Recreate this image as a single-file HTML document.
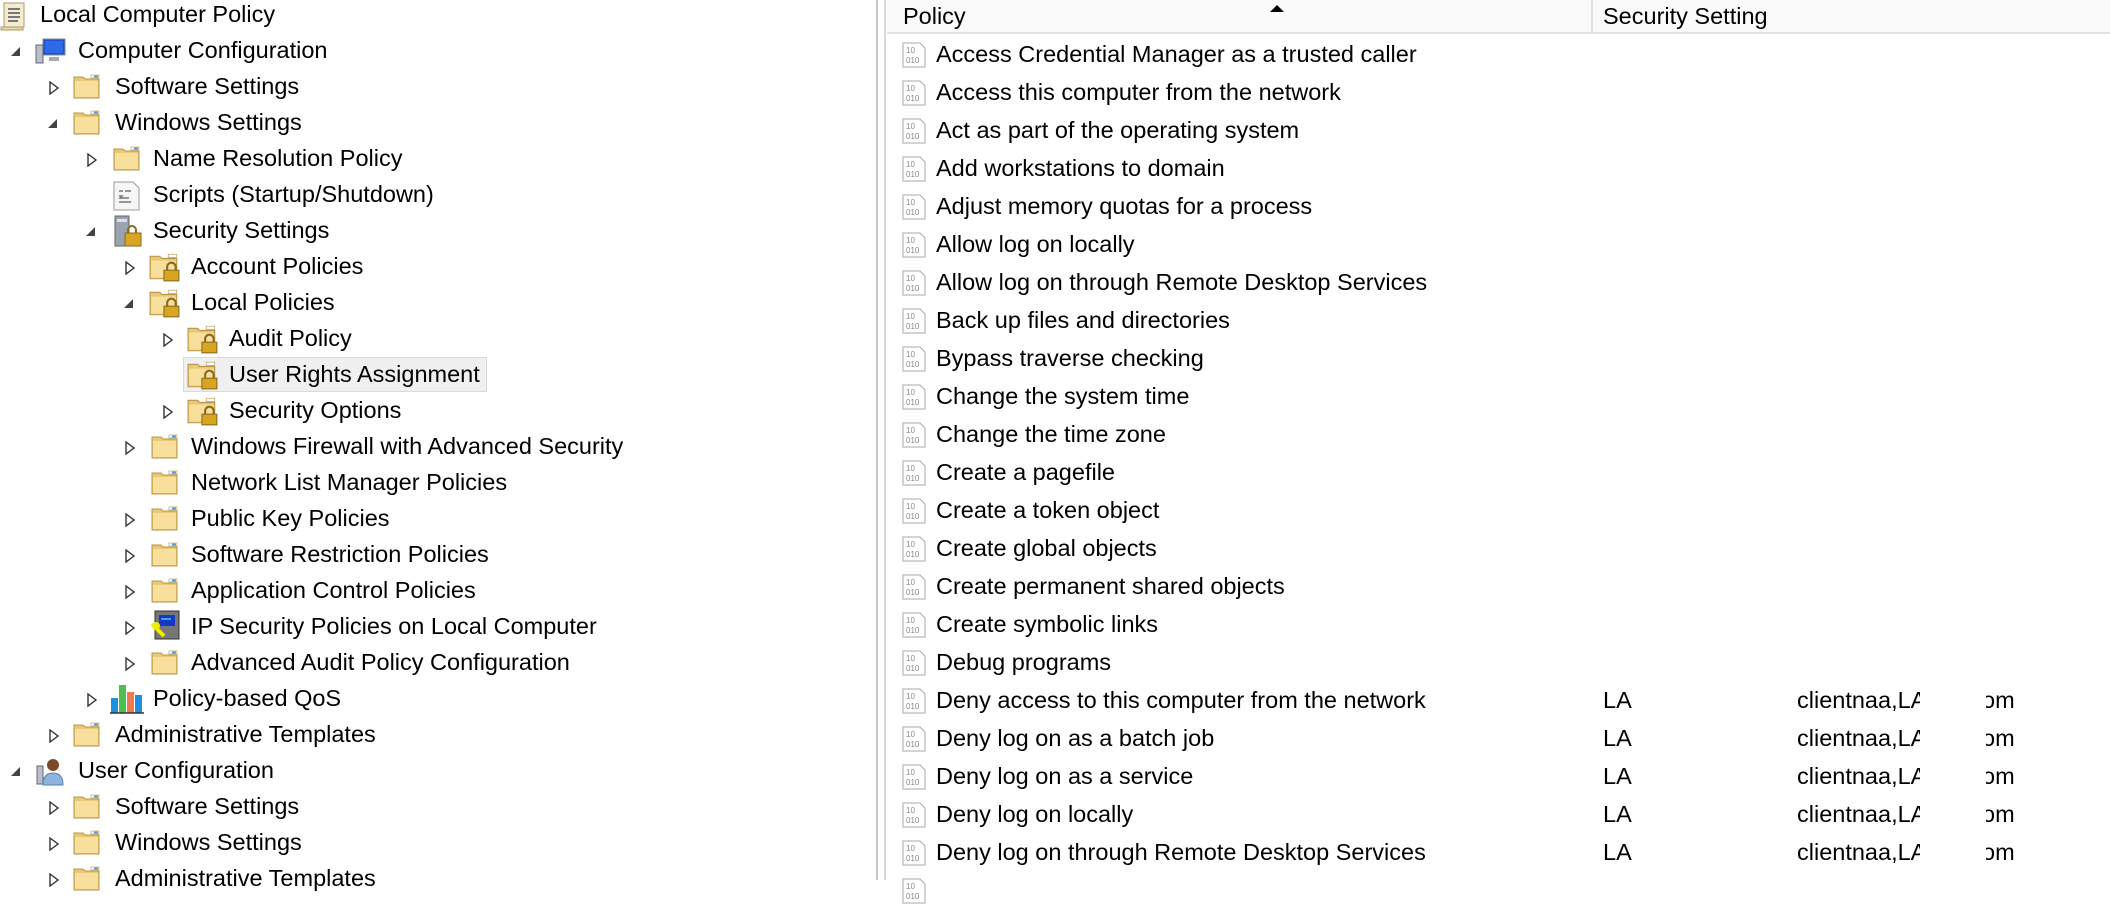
<!DOCTYPE html>
<html><head><meta charset="utf-8">
<style>
html,body{margin:0;padding:0;background:#fff;width:2110px;height:880px;overflow:hidden;font-family:"Liberation Sans",sans-serif;font-size:23.5px;color:#000}
.a{position:absolute;white-space:nowrap}
.t{position:absolute;white-space:nowrap;line-height:24px}
svg.i{position:absolute}
.om{position:absolute;left:1986px;width:40px;height:28px;overflow:hidden;line-height:24px}
.om span{position:relative;left:-4px}
</style></head><body>
<svg width="0" height="0" style="position:absolute">
<defs>
<symbol id="fold" viewBox="0 0 28 26"><path d="M1 4h9l2 2h14v19H1z" fill="#e8c877" stroke="#b9964a"/><rect x="2" y="8" width="23" height="16" fill="#f8df9c"/><rect x="18" y="2" width="8" height="3" fill="#fff" stroke="#b9964a" stroke-width=".6"/><rect x="21" y="2.5" width="4" height="2" fill="#4aa0e6"/></symbol>
<symbol id="lfold" viewBox="0 0 30 28"><path d="M1 4h9l2 2h14v19H1z" fill="#e8c877" stroke="#b9964a"/><rect x="2" y="8" width="23" height="16" fill="#f8df9c"/><rect x="18" y="2" width="8" height="3" fill="#fff" stroke="#b9964a" stroke-width=".6"/><path d="M17 18v-4a4 4 0 0 1 8 0v4" fill="none" stroke="#8a6b1d" stroke-width="2"/><rect x="14" y="17" width="14" height="10" fill="#d9a520" stroke="#8a6b1d"/></symbol>
<symbol id="pol" viewBox="0 0 26 26"><path d="M2 1h17l5 5v19H2z" fill="#fff" stroke="#aaa"/><text x="5" y="11" font-size="8" fill="#888" font-family="Liberation Sans">10</text><text x="5" y="21" font-size="8" fill="#888" font-family="Liberation Sans">010</text></symbol>
</defs></svg>

<div class="a" style="left:876px;top:0;width:2px;height:880px;background:#c8c8c8"></div>
<div class="a" style="left:884px;top:0;width:2px;height:880px;background:#d8d8d8"></div>

<div class="a" style="left:887px;top:0;width:1223px;height:32px;background:#fafafa;border-bottom:2px solid #e2e2e2"></div>
<div class="a" style="left:1591px;top:0;width:2px;height:32px;background:#e2e2e2"></div>
<div class="t" style="left:903px;top:4px">Policy</div>
<div class="t" style="left:1603px;top:4px">Security Setting</div>
<div class="a" style="left:1270px;top:5px;width:0;height:0;border-left:7px solid transparent;border-right:7px solid transparent;border-bottom:7px solid #000"></div>

<svg class="i" style="left:0;top:1px" width="28" height="30" viewBox="0 0 28 30"><path d="M4 2h20v24H4z" fill="#f3eccf" stroke="#a89a6a"/><path d="M8 8h12M8 12h12M8 16h12M8 20h10" stroke="#777" stroke-width="2"/><path d="M1 26h22v3H1z" fill="#e6d9a8" stroke="#a89a6a"/></svg>
<div class="t" style="left:40px;top:2px">Local Computer Policy</div>

<div class="a" style="left:183px;top:357px;width:302px;height:33px;background:#f0f0f0;border:1px solid #d9d9d9"></div>

<div style="position:absolute;left:0;top:0">
<svg class="i" style="left:10px;top:46px" width="11" height="11"><path d="M10 1V10H1z" fill="#444"/></svg>
<svg class="i" style="left:35px;top:37px" width="32" height="28" viewBox="0 0 32 28"><rect x="8" y="2" width="22" height="16" fill="#1e4fd6" stroke="#888"/><rect x="10" y="4" width="18" height="12" fill="#2d6be6"/><rect x="14" y="20" width="10" height="4" fill="#aaa"/><rect x="1" y="8" width="7" height="18" fill="#b9bfc8" stroke="#667"/></svg>
<div class="t" style="left:78px;top:38px">Computer Configuration</div>

<svg class="i" style="left:49px;top:81px" width="10" height="14"><path d="M1 1L9 7L1 13z" fill="#fff" stroke="#333" stroke-width="1.4"/></svg>
<svg class="i" style="left:73px;top:73px" width="28" height="26"><use href="#fold"/></svg>
<div class="t" style="left:115px;top:74px">Software Settings</div>

<svg class="i" style="left:47px;top:118px" width="11" height="11"><path d="M10 1V10H1z" fill="#444"/></svg>
<svg class="i" style="left:73px;top:109px" width="28" height="26"><use href="#fold"/></svg>
<div class="t" style="left:115px;top:110px">Windows Settings</div>

<svg class="i" style="left:87px;top:153px" width="10" height="14"><path d="M1 1L9 7L1 13z" fill="#fff" stroke="#333" stroke-width="1.4"/></svg>
<svg class="i" style="left:113px;top:145px" width="28" height="26"><use href="#fold"/></svg>
<div class="t" style="left:153px;top:146px">Name Resolution Policy</div>

<svg class="i" style="left:113px;top:181px" width="27" height="30" viewBox="0 0 27 30"><path d="M1 1h19l6 6v22H1z" fill="#f6f6f6" stroke="#999"/><path d="M6 10h4M12 10h6M6 15h3l-2 2h9M6 21h12" stroke="#777" stroke-width="1.5" fill="none"/></svg>
<div class="t" style="left:153px;top:182px">Scripts (Startup/Shutdown)</div>

<svg class="i" style="left:85px;top:226px" width="11" height="11"><path d="M10 1V10H1z" fill="#444"/></svg>
<svg class="i" style="left:114px;top:215px" width="28" height="32" viewBox="0 0 28 32"><rect x="1" y="1" width="14" height="30" fill="#9aa3ad" stroke="#666"/><rect x="3" y="4" width="10" height="3" fill="#dde"/><path d="M14 19v-4a4 4 0 0 1 8 0v4" fill="none" stroke="#8a6b1d" stroke-width="2"/><rect x="11" y="18" width="16" height="13" fill="#d9a520" stroke="#8a6b1d"/></svg>
<div class="t" style="left:153px;top:218px">Security Settings</div>

<svg class="i" style="left:125px;top:261px" width="10" height="14"><path d="M1 1L9 7L1 13z" fill="#fff" stroke="#333" stroke-width="1.4"/></svg>
<svg class="i" style="left:149px;top:252px" width="32" height="30" viewBox="0 0 30 28"><use href="#lfold"/></svg>
<div class="t" style="left:191px;top:254px">Account Policies</div>

<svg class="i" style="left:123px;top:298px" width="11" height="11"><path d="M10 1V10H1z" fill="#444"/></svg>
<svg class="i" style="left:149px;top:288px" width="32" height="30" viewBox="0 0 30 28"><use href="#lfold"/></svg>
<div class="t" style="left:191px;top:290px">Local Policies</div>

<svg class="i" style="left:163px;top:333px" width="10" height="14"><path d="M1 1L9 7L1 13z" fill="#fff" stroke="#333" stroke-width="1.4"/></svg>
<svg class="i" style="left:187px;top:324px" width="32" height="30" viewBox="0 0 30 28"><use href="#lfold"/></svg>
<div class="t" style="left:229px;top:326px">Audit Policy</div>

<svg class="i" style="left:187px;top:360px" width="32" height="30" viewBox="0 0 30 28"><use href="#lfold"/></svg>
<div class="t" style="left:229px;top:362px">User Rights Assignment</div>

<svg class="i" style="left:163px;top:405px" width="10" height="14"><path d="M1 1L9 7L1 13z" fill="#fff" stroke="#333" stroke-width="1.4"/></svg>
<svg class="i" style="left:187px;top:396px" width="32" height="30" viewBox="0 0 30 28"><use href="#lfold"/></svg>
<div class="t" style="left:229px;top:398px">Security Options</div>

<svg class="i" style="left:125px;top:441px" width="10" height="14"><path d="M1 1L9 7L1 13z" fill="#fff" stroke="#333" stroke-width="1.4"/></svg>
<svg class="i" style="left:151px;top:433px" width="28" height="26"><use href="#fold"/></svg>
<div class="t" style="left:191px;top:434px">Windows Firewall with Advanced Security</div>

<svg class="i" style="left:151px;top:469px" width="28" height="26"><use href="#fold"/></svg>
<div class="t" style="left:191px;top:470px">Network List Manager Policies</div>

<svg class="i" style="left:125px;top:513px" width="10" height="14"><path d="M1 1L9 7L1 13z" fill="#fff" stroke="#333" stroke-width="1.4"/></svg>
<svg class="i" style="left:151px;top:505px" width="28" height="26"><use href="#fold"/></svg>
<div class="t" style="left:191px;top:506px">Public Key Policies</div>

<svg class="i" style="left:125px;top:549px" width="10" height="14"><path d="M1 1L9 7L1 13z" fill="#fff" stroke="#333" stroke-width="1.4"/></svg>
<svg class="i" style="left:151px;top:541px" width="28" height="26"><use href="#fold"/></svg>
<div class="t" style="left:191px;top:542px">Software Restriction Policies</div>

<svg class="i" style="left:125px;top:585px" width="10" height="14"><path d="M1 1L9 7L1 13z" fill="#fff" stroke="#333" stroke-width="1.4"/></svg>
<svg class="i" style="left:151px;top:577px" width="28" height="26"><use href="#fold"/></svg>
<div class="t" style="left:191px;top:578px">Application Control Policies</div>

<svg class="i" style="left:125px;top:621px" width="10" height="14"><path d="M1 1L9 7L1 13z" fill="#fff" stroke="#333" stroke-width="1.4"/></svg>
<svg class="i" style="left:151px;top:610px" width="30" height="32" viewBox="0 0 30 32"><rect x="4" y="1" width="24" height="28" fill="#777" stroke="#333"/><rect x="8" y="5" width="16" height="11" fill="#1638c8"/><rect x="10" y="8" width="10" height="2" fill="#3ac"/><path d="M1 14l12 12" stroke="#ee0" stroke-width="4"/><circle cx="5" cy="16" r="4" fill="#ee0"/></svg>
<div class="t" style="left:191px;top:614px">IP Security Policies on Local Computer</div>

<svg class="i" style="left:125px;top:657px" width="10" height="14"><path d="M1 1L9 7L1 13z" fill="#fff" stroke="#333" stroke-width="1.4"/></svg>
<svg class="i" style="left:151px;top:649px" width="28" height="26"><use href="#fold"/></svg>
<div class="t" style="left:191px;top:650px">Advanced Audit Policy Configuration</div>

<svg class="i" style="left:87px;top:693px" width="10" height="14"><path d="M1 1L9 7L1 13z" fill="#fff" stroke="#333" stroke-width="1.4"/></svg>
<svg class="i" style="left:110px;top:684px" width="34" height="30" viewBox="0 0 34 30"><rect x="1" y="14" width="7" height="15" fill="#1d8fe0"/><rect x="9" y="1" width="7" height="28" fill="#4cc04c"/><rect x="17" y="8" width="7" height="21" fill="#f07a50"/><rect x="25" y="11" width="7" height="18" fill="#1d8fe0"/><path d="M0 29h34" stroke="#333" stroke-width="1.5"/></svg>
<div class="t" style="left:153px;top:686px">Policy-based QoS</div>

<svg class="i" style="left:49px;top:729px" width="10" height="14"><path d="M1 1L9 7L1 13z" fill="#fff" stroke="#333" stroke-width="1.4"/></svg>
<svg class="i" style="left:73px;top:721px" width="28" height="26"><use href="#fold"/></svg>
<div class="t" style="left:115px;top:722px">Administrative Templates</div>

<svg class="i" style="left:10px;top:766px" width="11" height="11"><path d="M10 1V10H1z" fill="#444"/></svg>
<svg class="i" style="left:36px;top:756px" width="30" height="30" viewBox="0 0 30 30"><rect x="1" y="10" width="6" height="18" fill="#b9bfc8" stroke="#667"/><circle cx="17" cy="9" r="6" fill="#7a4a2a"/><path d="M7 29c0-9 4-12 10-12s10 3 10 12z" fill="#8fb4e0" stroke="#5a7fb0"/></svg>
<div class="t" style="left:78px;top:758px">User Configuration</div>

<svg class="i" style="left:49px;top:801px" width="10" height="14"><path d="M1 1L9 7L1 13z" fill="#fff" stroke="#333" stroke-width="1.4"/></svg>
<svg class="i" style="left:73px;top:793px" width="28" height="26"><use href="#fold"/></svg>
<div class="t" style="left:115px;top:794px">Software Settings</div>

<svg class="i" style="left:49px;top:837px" width="10" height="14"><path d="M1 1L9 7L1 13z" fill="#fff" stroke="#333" stroke-width="1.4"/></svg>
<svg class="i" style="left:73px;top:829px" width="28" height="26"><use href="#fold"/></svg>
<div class="t" style="left:115px;top:830px">Windows Settings</div>

<svg class="i" style="left:49px;top:873px" width="10" height="14"><path d="M1 1L9 7L1 13z" fill="#fff" stroke="#333" stroke-width="1.4"/></svg>
<svg class="i" style="left:73px;top:865px" width="28" height="26"><use href="#fold"/></svg>
<div class="t" style="left:115px;top:866px">Administrative Templates</div>
</div>

<div style="position:absolute;left:0;top:0">
<svg class="i" style="left:901px;top:42px" width="26" height="26"><use href="#pol"/></svg><div class="t" style="left:936px;top:42px">Access Credential Manager as a trusted caller</div>
<svg class="i" style="left:901px;top:80px" width="26" height="26"><use href="#pol"/></svg><div class="t" style="left:936px;top:80px">Access this computer from the network</div>
<svg class="i" style="left:901px;top:118px" width="26" height="26"><use href="#pol"/></svg><div class="t" style="left:936px;top:118px">Act as part of the operating system</div>
<svg class="i" style="left:901px;top:156px" width="26" height="26"><use href="#pol"/></svg><div class="t" style="left:936px;top:156px">Add workstations to domain</div>
<svg class="i" style="left:901px;top:194px" width="26" height="26"><use href="#pol"/></svg><div class="t" style="left:936px;top:194px">Adjust memory quotas for a process</div>
<svg class="i" style="left:901px;top:232px" width="26" height="26"><use href="#pol"/></svg><div class="t" style="left:936px;top:232px">Allow log on locally</div>
<svg class="i" style="left:901px;top:270px" width="26" height="26"><use href="#pol"/></svg><div class="t" style="left:936px;top:270px">Allow log on through Remote Desktop Services</div>
<svg class="i" style="left:901px;top:308px" width="26" height="26"><use href="#pol"/></svg><div class="t" style="left:936px;top:308px">Back up files and directories</div>
<svg class="i" style="left:901px;top:346px" width="26" height="26"><use href="#pol"/></svg><div class="t" style="left:936px;top:346px">Bypass traverse checking</div>
<svg class="i" style="left:901px;top:384px" width="26" height="26"><use href="#pol"/></svg><div class="t" style="left:936px;top:384px">Change the system time</div>
<svg class="i" style="left:901px;top:422px" width="26" height="26"><use href="#pol"/></svg><div class="t" style="left:936px;top:422px">Change the time zone</div>
<svg class="i" style="left:901px;top:460px" width="26" height="26"><use href="#pol"/></svg><div class="t" style="left:936px;top:460px">Create a pagefile</div>
<svg class="i" style="left:901px;top:498px" width="26" height="26"><use href="#pol"/></svg><div class="t" style="left:936px;top:498px">Create a token object</div>
<svg class="i" style="left:901px;top:536px" width="26" height="26"><use href="#pol"/></svg><div class="t" style="left:936px;top:536px">Create global objects</div>
<svg class="i" style="left:901px;top:574px" width="26" height="26"><use href="#pol"/></svg><div class="t" style="left:936px;top:574px">Create permanent shared objects</div>
<svg class="i" style="left:901px;top:612px" width="26" height="26"><use href="#pol"/></svg><div class="t" style="left:936px;top:612px">Create symbolic links</div>
<svg class="i" style="left:901px;top:650px" width="26" height="26"><use href="#pol"/></svg><div class="t" style="left:936px;top:650px">Debug programs</div>
<svg class="i" style="left:901px;top:688px" width="26" height="26"><use href="#pol"/></svg><div class="t" style="left:936px;top:688px">Deny access to this computer from the network</div>
<svg class="i" style="left:901px;top:726px" width="26" height="26"><use href="#pol"/></svg><div class="t" style="left:936px;top:726px">Deny log on as a batch job</div>
<svg class="i" style="left:901px;top:764px" width="26" height="26"><use href="#pol"/></svg><div class="t" style="left:936px;top:764px">Deny log on as a service</div>
<svg class="i" style="left:901px;top:802px" width="26" height="26"><use href="#pol"/></svg><div class="t" style="left:936px;top:802px">Deny log on locally</div>
<svg class="i" style="left:901px;top:840px" width="26" height="26"><use href="#pol"/></svg><div class="t" style="left:936px;top:840px">Deny log on through Remote Desktop Services</div>
<svg class="i" style="left:901px;top:878px" width="26" height="26"><use href="#pol"/></svg>

<div class="t" style="left:1603px;top:688px">LA</div><div class="t" style="left:1797px;top:688px">clientnaa,LA</div><div class="om" style="top:688px"><span>om</span></div>
<div class="t" style="left:1603px;top:726px">LA</div><div class="t" style="left:1797px;top:726px">clientnaa,LA</div><div class="om" style="top:726px"><span>om</span></div>
<div class="t" style="left:1603px;top:764px">LA</div><div class="t" style="left:1797px;top:764px">clientnaa,LA</div><div class="om" style="top:764px"><span>om</span></div>
<div class="t" style="left:1603px;top:802px">LA</div><div class="t" style="left:1797px;top:802px">clientnaa,LA</div><div class="om" style="top:802px"><span>om</span></div>
<div class="t" style="left:1603px;top:840px">LA</div><div class="t" style="left:1797px;top:840px">clientnaa,LA</div><div class="om" style="top:840px"><span>om</span></div>
<div class="a" style="left:1920px;top:685px;width:10px;height:180px;background:#fff"></div>
</div>
</body></html>
